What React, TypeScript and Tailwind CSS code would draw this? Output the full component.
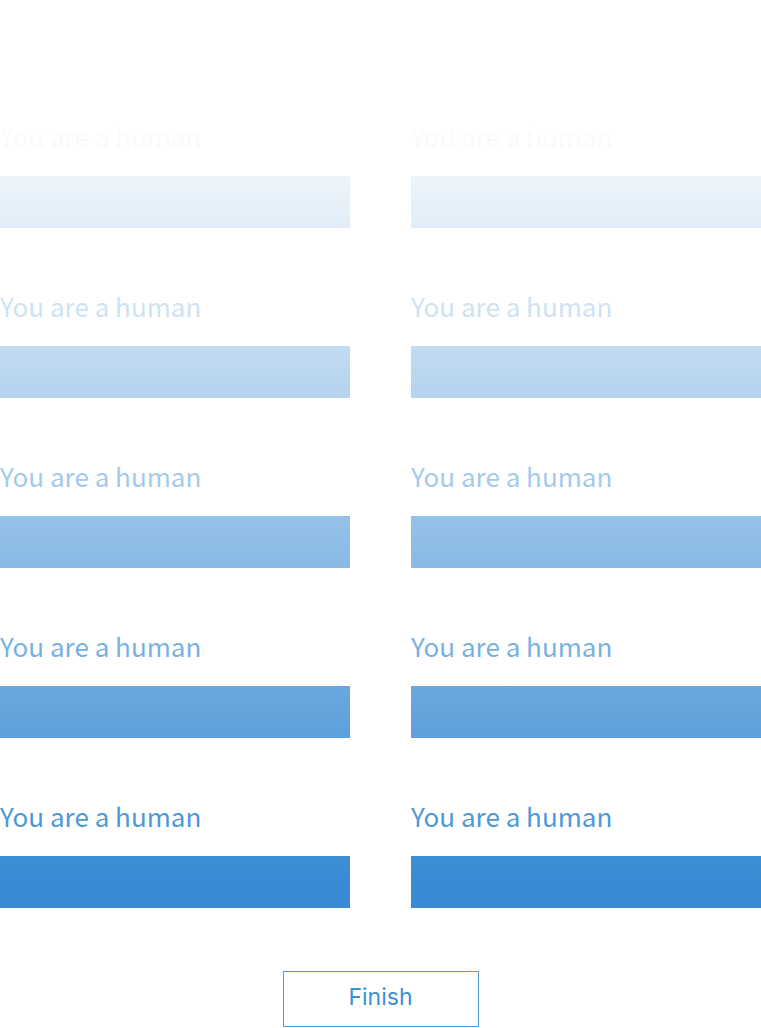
const fields = [0, 1, 2, 3, 4, 5, 6, 7, 8, 9];

export default function App() {
  return (
    <main className="relative bg-white pt-[119px] text-[#3c8fd4]">
      <form>
        <div className="grid grid-cols-2 gap-x-[61px] gap-y-[61px]">
          {fields.map((id) => (
            <div key={id} className="flex flex-col">
              <label
                htmlFor={`field-${id}`}
                className="mb-[23px] font-[family-name:'Noto_Sans_CJK_SC','Noto_Sans',sans-serif] text-[26px] leading-[34px]"
              >
                You are a human
              </label>
              <input
                id={`field-${id}`}
                type="text"
                className="h-[52px] w-full bg-[#378ad3] px-4 text-2xl text-white outline-none"
              />
            </div>
          ))}
        </div>
        <div className="pointer-events-none absolute inset-x-0 top-0 h-[885px] bg-linear-to-b from-white from-[108px] to-white/0" />
        <div className="mt-[63px] flex justify-center">
          <button
            type="button"
            className="h-14 w-49 border border-[#4f9bdb] pb-1 font-[family-name:Inter,sans-serif] text-[23px]"
          >
            Finish
          </button>
        </div>
      </form>
    </main>
  );
}
